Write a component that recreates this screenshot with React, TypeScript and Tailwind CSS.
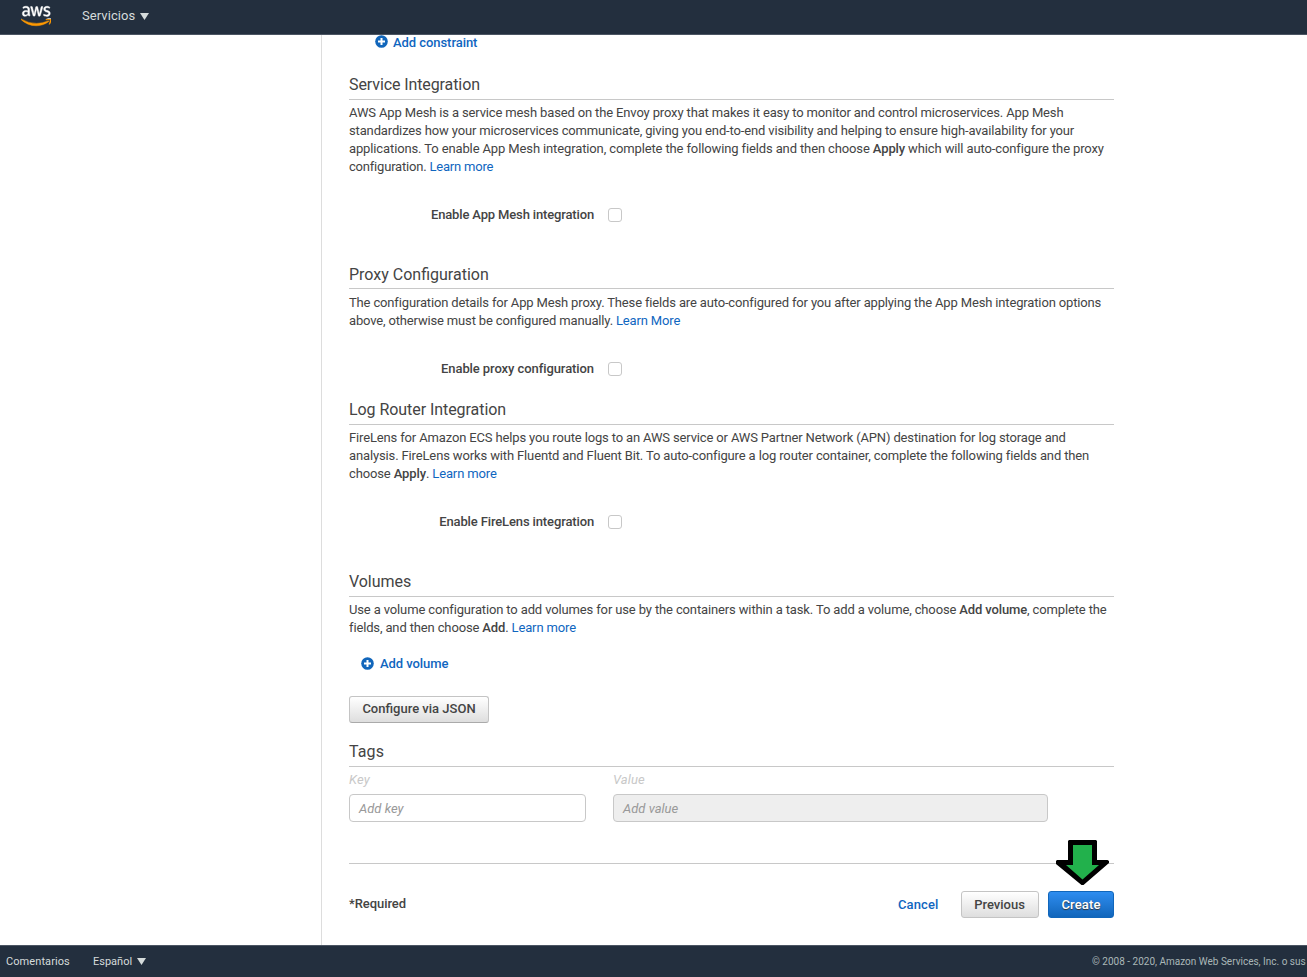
import React from "react";
import { FaAws } from "react-icons/fa";

function Line({ t = "", children }: { t?: string; children: React.ReactNode }) {
  return (
    <span className="block h-[18px]">
      <span className={`whitespace-nowrap ${t}`}>{children}</span>
    </span>
  );
}

function Heading({ t = "", children }: { t?: string; children: React.ReactNode }) {
  return (
    <h2 className="h-[25px] border-b border-[#c8c8c8] text-base leading-[20px] font-normal">
      <span className={t}>{children}</span>
    </h2>
  );
}

function Link({ children }: { children: React.ReactNode }) {
  return <a className="text-[#0f66bf]">{children}</a>;
}

function Toggle({ t = "", label }: { t?: string; label: string }) {
  return (
    <label className="mt-[29px] flex h-[19px] items-center">
      <span className="w-[245px] text-right font-medium whitespace-nowrap">
        <span className={t}>{label}</span>
      </span>
      <span className="ml-[14px] size-[14px] rounded-[3px] border border-[#c8c8c8] bg-white" />
    </label>
  );
}

function Plus() {
  return (
    <svg className="size-[13px]" viewBox="0 0 13 13">
      <circle cx="6.5" cy="6.5" r="6.3" fill="#1166bb" />
      <path d="M6.5 3v7M3 6.5h7" stroke="#fff" strokeWidth="2" />
    </svg>
  );
}

function Caret() {
  return (
    <svg className="h-[7px] w-[9px]" viewBox="0 0 9 7">
      <path d="M0 0h9L4.5 7z" fill="#d5dbdb" />
    </svg>
  );
}

export default function App() {
  return (
    <div className="flex h-[977px] w-[1307px] flex-col overflow-hidden bg-white font-[Roboto,sans-serif] text-[13px] leading-[18px] text-[#444]">
      <header className="flex h-[35px] shrink-0 items-start border-b border-[#4b5563] bg-[#232f3e] text-[#d5dbdb]">
        <svg className="absolute size-0" aria-hidden="true">
          <linearGradient id="mark" x1="0" y1="0" x2="0" y2="1">
            <stop offset="0.66" stopColor="#fff" />
            <stop offset="0.66" stopColor="#f90" />
          </linearGradient>
        </svg>
        <FaAws
          fill="url(#mark)"
          stroke="url(#mark)"
          strokeWidth="9"
          preserveAspectRatio="none"
          className="mt-[2.5px] ml-[20.5px] h-[26px] w-[30.5px]"
        />
        <span className="mt-[7px] ml-[31px] w-[58px]">
          <span className="tracking-[0.07px]">Servicios</span>
        </span>
        <span className="mt-[13px] flex"><Caret /></span>
      </header>

      <div className="flex h-[910px] shrink-0">
        <aside className="w-[322px] shrink-0 border-r border-[#ddd]" />
        <main className="ml-[27px] w-[765px]">
          <div className="flex h-10 items-start pl-[26px] font-medium text-[#0f66bf]">
            <span><Plus /></span>
            <span className="-mt-px ml-[5px] tracking-[-0.06px]">Add constraint</span>
          </div>

          <section className="h-[189px]">
            <Heading t="tracking-[-0.1px]">Service Integration</Heading>
            <p className="mt-1">
              <Line t="tracking-[-0.142px]">AWS App Mesh is a service mesh based on the Envoy proxy that makes it easy to monitor and control microservices. App Mesh</Line>
              <Line t="tracking-[-0.14px]">standardizes how your microservices communicate, giving you end-to-end visibility and helping to ensure high-availability for your</Line>
              <Line t="tracking-[-0.124px]">applications. To enable App Mesh integration, complete the following fields and then choose <b className="font-medium">Apply</b> which will auto-configure the proxy</Line>
              <Line t="tracking-[-0.2px]">configuration. <Link>Learn more</Link></Line>
            </p>
            <Toggle t="tracking-[-0.15px]" label="Enable App Mesh integration" />
          </section>

          <section className="h-[136px]">
            <div className="h-[25px]">
              <h2 className="h-[25px] border-b border-[#c8c8c8] pt-px text-base leading-[20px] font-normal">Proxy Configuration</h2>
            </div>
            <p className="mt-[5px]">
              <Line t="tracking-[-0.152px]">The configuration details for App Mesh proxy. These fields are auto-configured for you after applying the App Mesh integration options</Line>
              <Line t="tracking-[-0.16px]">above, otherwise must be configured manually. <Link>Learn More</Link></Line>
            </p>
            <Toggle t="tracking-[-0.08px]" label="Enable proxy configuration" />
          </section>

          <section className="h-[172px]">
            <Heading t="tracking-[-0.06px]">Log Router Integration</Heading>
            <p className="mt-1">
              <Line t="tracking-[-0.148px]">FireLens for Amazon ECS helps you route logs to an AWS service or AWS Partner Network (APN) destination for log storage and</Line>
              <Line t="tracking-[-0.135px]">analysis. FireLens works with Fluentd and Fluent Bit. To auto-configure a log router container, complete the following fields and then</Line>
              <Line t="tracking-[-0.13px]">choose <b className="font-medium">Apply</b>. <Link>Learn more</Link></Line>
            </p>
            <Toggle t="tracking-[-0.13px]" label="Enable FireLens integration" />
          </section>

          <section className="h-[170px]">
            <Heading t="tracking-[-0.05px]">Volumes</Heading>
            <p className="mt-1">
              <Line t="tracking-[-0.135px]">Use a volume configuration to add volumes for use by the containers within a task. To add a volume, choose <b className="font-medium">Add volume</b>, complete the</Line>
              <Line t="tracking-[-0.14px]">fields, and then choose <b className="font-medium">Add</b>. <Link>Learn more</Link></Line>
            </p>
            <div className="mt-[17px] flex h-[19px] items-center pl-3 font-medium text-[#0f66bf]">
              <Plus />
              <span className="ml-[6px] tracking-[-0.08px]">Add volume</span>
            </div>
            <button className="mt-[23px] flex h-[27px] w-[140px] items-center justify-center rounded-[3px] border border-[#c4c4c4] border-b-[#aaa] bg-linear-to-b from-white to-[#dedede] pb-[2px] font-medium">
              <span>Configure via JSON</span>
            </button>
          </section>

          <section className="h-[121px]">
            <Heading t="tracking-[0.1px]">Tags</Heading>
            <div className="mt-1 flex gap-[27px]">
              <label className="w-[237px] text-[#c8c8c8] italic">
                <span className="tracking-[0.2px]">Key</span>
                <span className="mt-[5px] flex h-[28px] items-center rounded-[4px] border border-[#c8c8c8] bg-white pt-px pl-[9px] text-[#999]">Add key</span>
              </label>
              <label className="w-[435px] text-[#c8c8c8] italic">
                <span className="tracking-[0.1px]">Value</span>
                <span className="mt-[5px] flex h-[28px] items-center rounded-[4px] border border-[#c8c8c8] bg-[#eee] pt-px pl-[9px] text-[#999]">Add value</span>
              </label>
            </div>
          </section>

          <div className="relative flex h-[55px] items-end border-t border-[#c8c8c8] font-medium">
            <span className="mb-[5px] w-[549px] tracking-[-0.06px]">*Required</span>
            <a className="mb-1 w-[63px] tracking-[0.1px] text-[#0f66bf]">Cancel</a>
            <button className="flex h-[27px] w-[78px] items-center justify-center rounded-[3px] border border-[#c4c4c4] bg-linear-to-b from-white to-[#dedede] pr-px font-medium">
              <span>Previous</span>
            </button>
            <button className="ml-[9px] flex h-[27px] w-[66px] items-center justify-center rounded-[3px] border border-[#1166bb] bg-linear-to-b from-[#2e8df0] to-[#1166bb] font-medium text-white [text-shadow:0_1px_1px_#333]">
              <span className="tracking-[0.15px]">Create</span>
            </button>
            <svg className="absolute top-[-24px] left-[706px] h-[46px] w-[55px]" viewBox="0 0 55 46">
              <path d="M14 0h27l1 1v19h10.500l1.500 1v2L28.500 45h-2L1 24v-3l1-1h11V1z" fill="#000" />
              <path d="M18 5h19v20h7L27.500 39.500 11 25h7z" fill="#22b14c" />
            </svg>
          </div>
        </main>
      </div>

      <footer className="flex h-[32px] shrink-0 items-start border-t border-[#4b5563] bg-[#232f3e] pt-[7px] text-[11px] text-[#d5dbdb]">
        <span className="w-[87px] pl-[6px]"><span className="tracking-[0.08px]">Comentarios</span></span>
        <span className="ml-[6px] w-[45px]"><span className="-ml-[6px] pl-[6px]">Español</span></span>
        <span className="mt-[5px] -ml-px flex"><Caret /></span>
        <span className="ml-[946px] whitespace-nowrap text-[10px] text-[#aab7b8]">© 2008 - 2020, Amazon Web Services, Inc. o sus</span>
      </footer>
    </div>
  );
}
